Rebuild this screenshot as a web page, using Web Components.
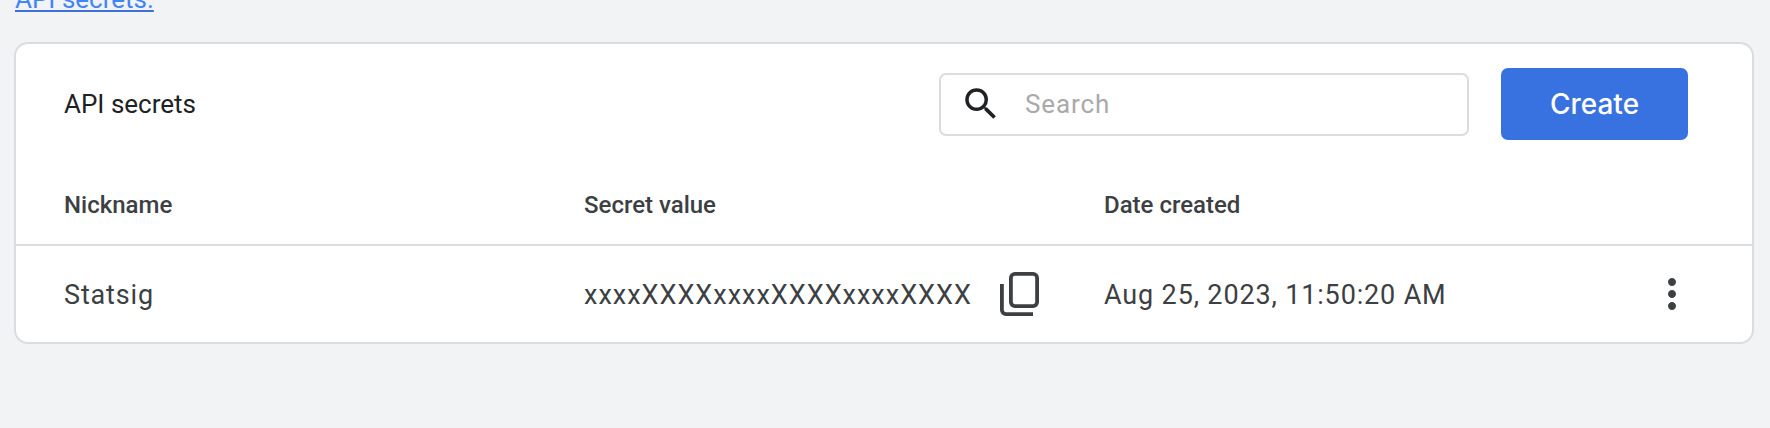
<!DOCTYPE html>
<html><head><meta charset="utf-8"><style>
html,body{margin:0;padding:0;height:428px;overflow:hidden;background:#f1f3f4;}
body{font-family:Roboto,"Liberation Sans",sans-serif;}
</style></head><body>
<secrets-page></secrets-page>
<script>
function def(name, html){
  customElements.define(name, class extends HTMLElement{
    constructor(){super();const s=this.attachShadow({mode:'open'});s.innerHTML=html;}
  });
}
def('secrets-page',`<style>
:host{display:flex;flex-direction:column;height:428px;overflow:hidden;padding:0 16px 0 14px;box-sizing:border-box}
a{display:block;margin-top:-16px;margin-left:1px;height:30px;font:26px/30px Roboto,sans-serif;color:#4285f4;text-decoration:underline;text-decoration-color:#3f6fd8;width:max-content}
secrets-card{margin-top:28px}
</style><a href="#">API secrets.</a><secrets-card></secrets-card>`);
def('search-box',`<style>
:host{display:flex;align-items:center;box-sizing:border-box;width:530px;height:63px;border:2px solid #dadce0;border-radius:7px;background:#fff;padding-left:19px}
svg{width:42px;height:42px;flex:none;margin-right:23px}
span{font:26px Roboto,sans-serif;letter-spacing:.9px;color:#a9a9a9}
</style><svg viewBox="0 0 24 24"><path fill="#202124" d="M15.5 14h-.79l-.28-.27A6.47 6.47 0 0 0 16 9.5 6.5 6.5 0 1 0 9.5 16c1.61 0 3.09-.59 4.23-1.57l.27.28v.79l5 4.99L20.49 19l-4.99-5zm-6 0C7.01 14 5 11.99 5 9.5S7.01 5 9.5 5 14 7.01 14 9.5 11.99 14 9.5 14z"/></svg><span>Search</span>`);
def('create-button',`<style>
:host{display:flex;align-items:center;justify-content:center;width:187px;height:72px;border-radius:7px;background:#3871e0;color:#fff;font:500 28px Inter,Roboto,sans-serif}
</style><slot></slot>`);
def('copy-icon',`<style>:host{display:block;width:42px;height:48px;flex:none}svg{display:block;width:42px;height:48px}</style>
<svg viewBox="0 0 42 48" fill="none" stroke="#3c4043" stroke-width="3.8"><rect x="11.9" y="3.9" width="26.2" height="32.2" rx="4"/><path d="M2.9 14V40.1a4 4 0 0 0 4 4H34"/></svg>`);
def('more-icon',`<style>:host{display:block;width:48px;height:48px}svg{display:block;width:48px;height:48px}</style>
<svg viewBox="0 0 24 24"><path fill="#3c4043" d="M12 8c1.1 0 2-.9 2-2s-.9-2-2-2-2 .9-2 2 .9 2 2 2zm0 2c-1.1 0-2 .9-2 2s.9 2 2 2 2-.9 2-2-.9-2-2-2zm0 6c-1.1 0-2 .9-2 2s.9 2 2 2 2-.9 2-2-.9-2-2-2z"/></svg>`);
def('secrets-card',`<style>
:host{display:block;box-sizing:border-box;background:#fff;border:2px solid #dadce0;border-radius:14px;font-family:Roboto,sans-serif}
.top{display:flex;align-items:center;height:120px;padding:0 64px 0 48px}
.title{font-size:26px;color:#202124;flex:1}
create-button{margin-left:32px}
.grid{display:grid;grid-template-columns:568px 520px 544px 1fr}
.head{height:82px;display:flex;align-items:center;box-sizing:border-box;padding-top:2px;font-size:24px;font-weight:500;color:#3c4043;border-bottom:2px solid #dadce0}
.cell{height:96px;display:flex;align-items:center;font-size:27px;letter-spacing:.85px;color:#3c4043}
.txt{padding-top:1px;box-sizing:border-box}
.val{letter-spacing:1px}
.pad{padding-left:48px}
copy-icon{margin-left:27px}
</style>
<div class="top"><div class="title">API secrets</div><search-box></search-box><create-button>Create</create-button></div>
<div class="grid">
<div class="head pad">Nickname</div><div class="head">Secret value</div><div class="head">Date created</div><div class="head"></div>
<div class="cell pad txt">Statsig</div><div class="cell"><span class="txt val">xxxxXXXXxxxxXXXXxxxxXXXX</span><copy-icon></copy-icon></div><div class="cell txt">Aug 25, 2023, 11:50:20 AM</div><div class="cell"><more-icon></more-icon></div>
</div>`);
</script></body></html>
